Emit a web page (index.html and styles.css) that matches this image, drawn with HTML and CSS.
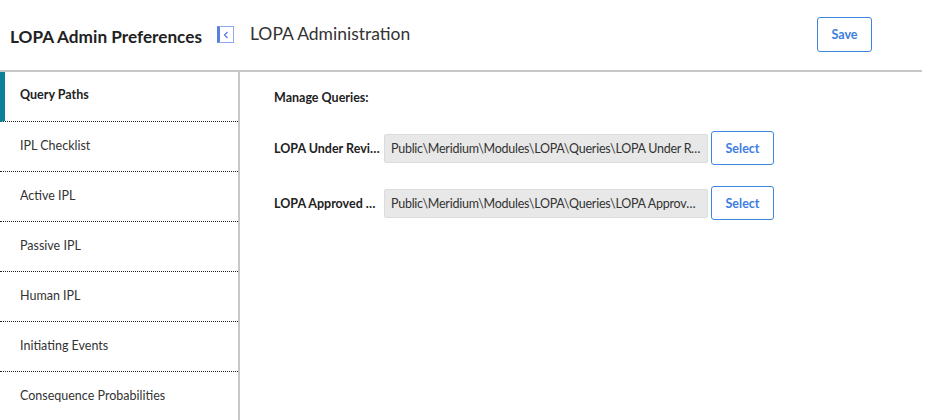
FILE: index.html
```html
<!DOCTYPE html>
<html lang="en">
<head>
    <meta charset="UTF-8">
    <meta name="viewport" content="width=device-width, initial-scale=1.0">
    <title>LOPA Admin Preferences</title>
    <link rel="stylesheet" href="styles.css">
</head>
<body>
    <div class="page">
        <div class="header">
            <h1 class="title">LOPA Admin Preferences</h1>
            <button type="button" class="collapse" aria-label="Collapse">
                <svg width="6" height="8" viewBox="0 0 6 8"><path d="M4.5 1 L1.5 4 L4.5 7" fill="none" stroke="#5b7fe0" stroke-width="1.3"/></svg>
            </button>
            <h2 class="subtitle">LOPA Administration</h2>
            <button type="button" class="btn savebtn">Save</button>
        </div>

        <div class="content">
            <ul class="sidebar">
                <li class="active">Query Paths</li>
                <li>IPL Checklist</li>
                <li>Active IPL</li>
                <li>Passive IPL</li>
                <li>Human IPL</li>
                <li>Initiating Events</li>
                <li>Consequence Probabilities</li>
            </ul>

            <div class="main">
                <h3>Manage Queries:</h3>

                <div class="row">
                    <label class="rowlabel">LOPA Under Review Query</label>
                    <div class="pathbox">Public\Meridium\Modules\LOPA\Queries\LOPA Under Review Query</div>
                    <button type="button" class="btn selectbtn">Select</button>
                </div>

                <div class="row">
                    <label class="rowlabel">LOPA Approved Query</label>
                    <div class="pathbox">Public\Meridium\Modules\LOPA\Queries\LOPA Approved Query</div>
                    <button type="button" class="btn selectbtn">Select</button>
                </div>
            </div>
        </div>
    </div>
</body>
</html>
```

FILE: styles.css
```css
* {
    box-sizing: border-box;
}

body {
    margin: 0;
    font-family: Lato, "Liberation Sans", sans-serif;
    color: #222;
    background: #fff;
}

.page {
    width: 922px;
    height: 420px;
    display: flex;
    flex-direction: column;
    overflow: hidden;
}

.header {
    height: 72px;
    flex-shrink: 0;
    display: flex;
    align-items: center;
    padding: 0 50px 0 10px;
    border-bottom: 2px solid #c8c8c8;
}

.title {
    margin: 0 15px 0 0;
    font-size: 17.2px;
    font-weight: bold;
    color: #222;
    position: relative;
    top: 1px;
}

.collapse {
    width: 17px;
    height: 17px;
    padding: 0;
    margin: -1px 16px 0 0;
    background: #fff;
    border: 1px solid #8fa8f0;
    border-left: 3px solid #5b7fe0;
    display: flex;
    align-items: center;
    justify-content: center;
}

.subtitle {
    margin: -3px 0 0 0;
    font-size: 17.5px;
    font-weight: normal;
    color: #333;
    flex: 1;
}

.btn {
    font-family: inherit;
    font-size: 12.5px;
    font-weight: bold;
    color: #3d7ee0;
    background: #fff;
    border: 1px solid #3d86e0;
    border-radius: 3px;
    cursor: pointer;
}

.savebtn {
    width: 55px;
    height: 35px;
    margin-top: -1px;
}

.content {
    flex: 1;
    display: flex;
    min-height: 0;
}

.sidebar {
    list-style: none;
    margin: 0;
    padding: 0;
    width: 240px;
    border-right: 2px solid #c8c8cc;
}

.sidebar li {
    height: 50px;
    padding: 0 0 3px 20px;
    display: flex;
    align-items: center;
    font-size: 12.5px;
    color: #333;
    border-bottom: 1px dotted #222;
}

.sidebar li.active {
    font-weight: bold;
    color: #222;
    border-left: 5px solid #0a8299;
    padding-left: 15px;
    padding-bottom: 4px;
}

.main {
    padding: 18px 0 0 34px;
}

.main h3 {
    margin: 0 0 26px 0;
    font-size: 12.5px;
    font-weight: bold;
}

.row {
    display: flex;
    align-items: center;
    margin-bottom: 21px;
}

.rowlabel {
    width: 110px;
    font-size: 12.5px;
    font-weight: bold;
    white-space: nowrap;
    overflow: hidden;
    text-overflow: ellipsis;
    padding-right: 2px;
}

.pathbox {
    width: 324px;
    height: 29px;
    line-height: 27px;
    padding: 0 6px;
    font-size: 12.5px;
    letter-spacing: -0.25px;
    color: #333;
    background: #e8e8e8;
    border: 1px solid #dcdcdc;
    border-radius: 2px;
    white-space: nowrap;
    overflow: hidden;
    text-overflow: ellipsis;
}

.selectbtn {
    width: 63px;
    height: 34px;
    margin-left: 3px;
}
```
